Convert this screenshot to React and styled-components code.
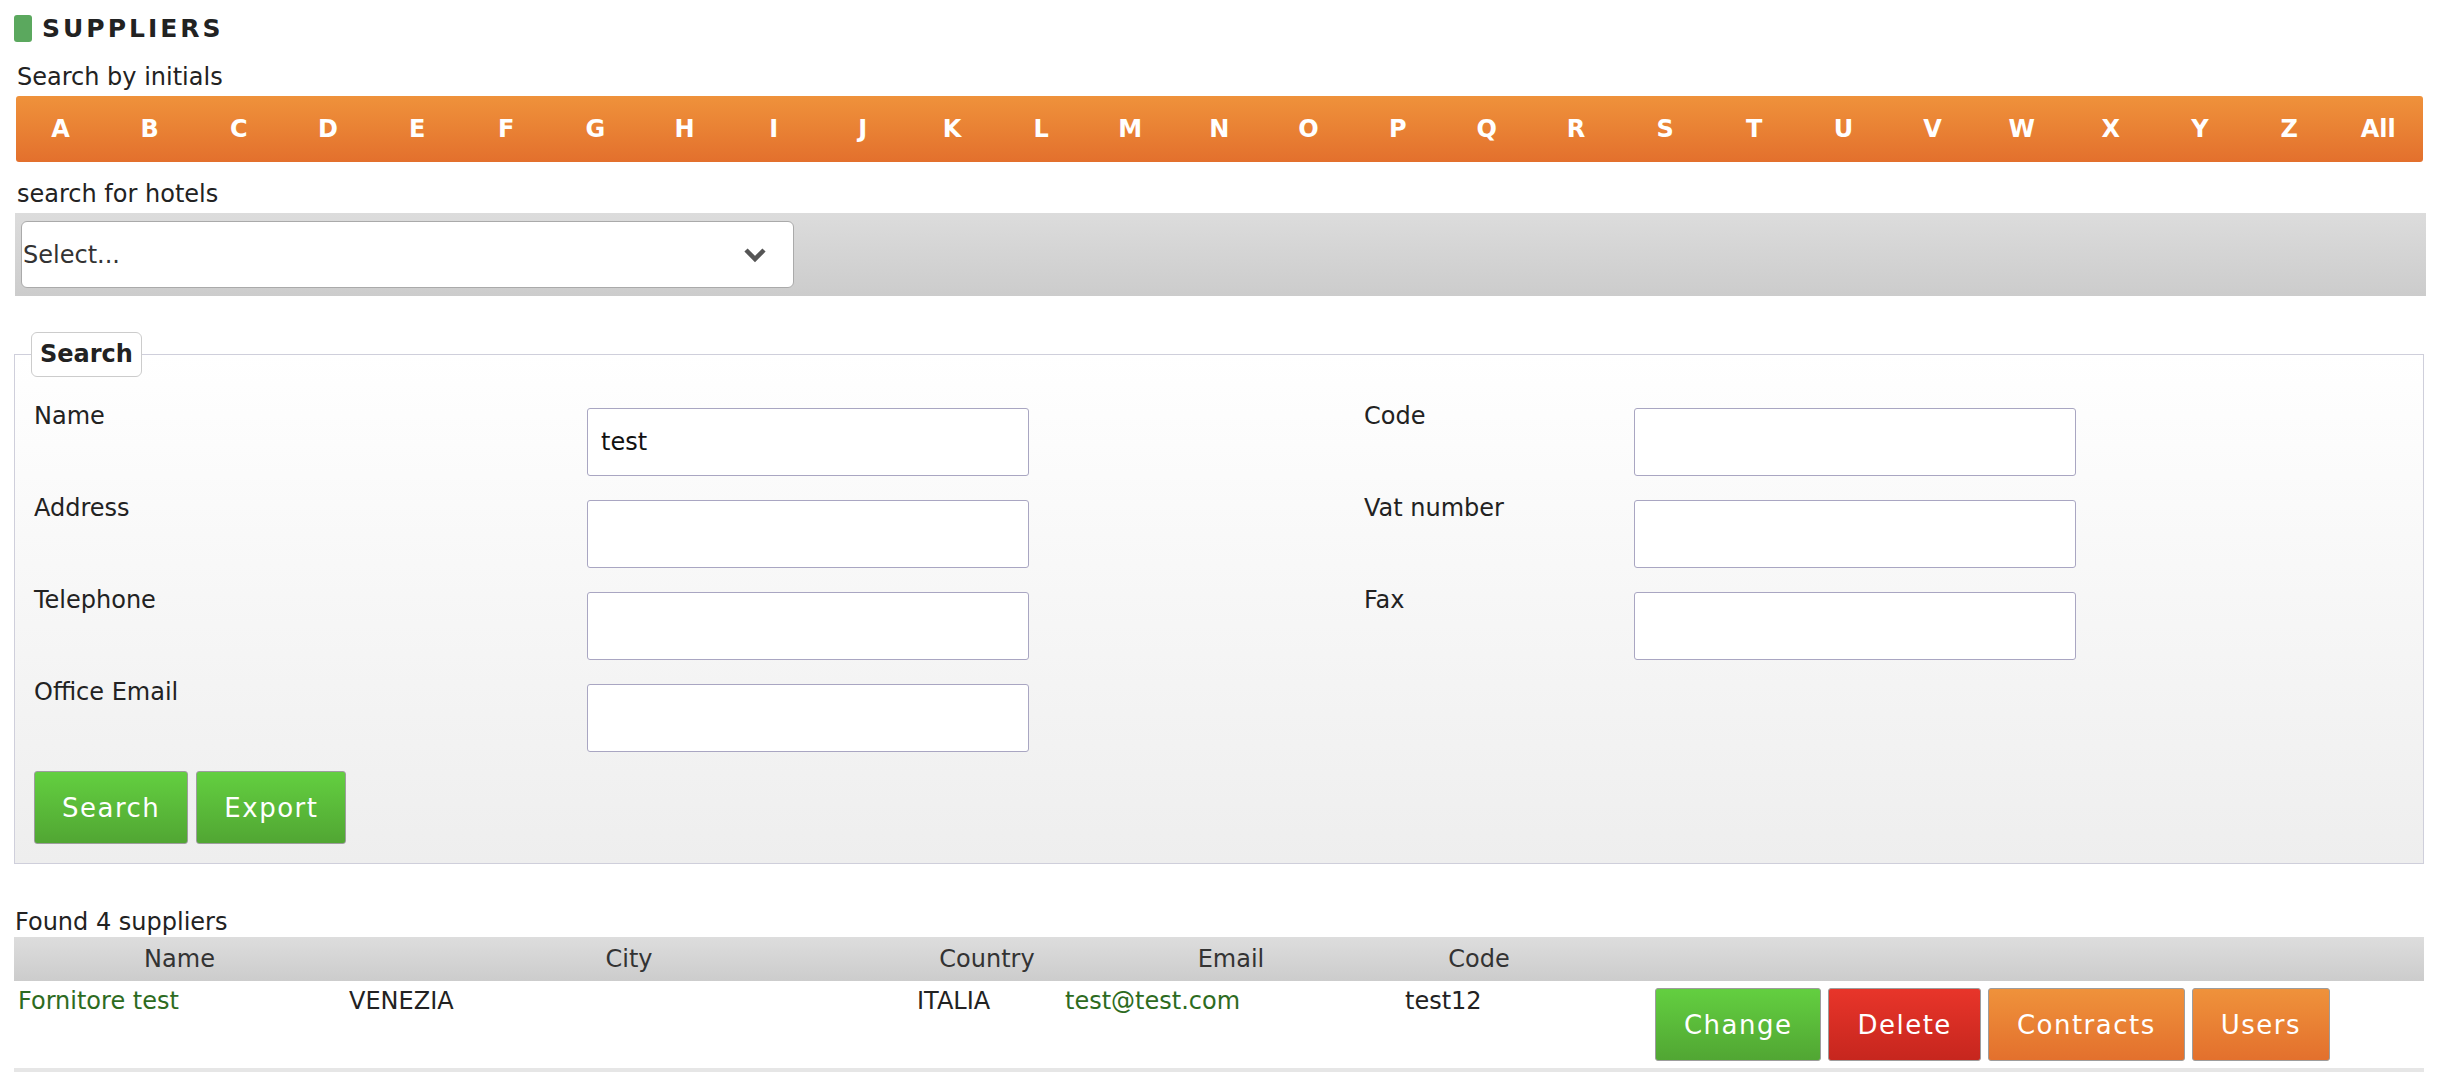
import styled, { createGlobalStyle } from "styled-components";

const LETTERS = "ABCDEFGHIJKLMNOPQRSTUVWXYZ".split("").concat("All");

const FIELDS = [
  { label: "Name", value: "test", right: "Code" },
  { label: "Address", right: "Vat number" },
  { label: "Telephone", right: "Fax" },
  { label: "Office Email" },
];

const TOTAL = 4;

const SUPPLIERS = [
  {
    name: "Fornitore test",
    city: "VENEZIA",
    country: "ITALIA",
    email: "test@test.com",
    code: "test12",
  },
];

const GlobalStyle = createGlobalStyle`
  body {
    margin: 0;
    background: #fff;
    color: #222;
    font-family: "DejaVu Sans", "Open Sans", sans-serif;
    font-size: 24px;
    line-height: 30px;
  }
  * { box-sizing: border-box; }
`;

const Page = styled.div`
  padding: 0 16px 0 14px;
`;

const Title = styled.div`
  display: flex;
  align-items: center;
  gap: 10px;
  margin-top: 15px;
  height: 27px;
`;

const Marker = styled.span`
  width: 18px;
  height: 27px;
  border-radius: 3px;
  background: #5ba85e;
`;

const TitleText = styled.h1`
  margin: 0;
  font-size: 25px;
  font-weight: bold;
  letter-spacing: 3px;
  color: #222;
`;

const Caption = styled.div`
  margin: ${(p) => p.$top}px 0 4px 3px;
  height: 30px;
`;

const Initials = styled.div`
  display: flex;
  height: 66px;
  margin: 0 1px 0 2px;
  border-radius: 3px;
  background: linear-gradient(#ef923b, #e3702d);
`;

const Initial = styled.a`
  flex: 1;
  display: flex;
  align-items: center;
  justify-content: center;
  color: #fff;
  font-weight: bold;
  font-size: 24px;
  cursor: pointer;
`;

const HotelBand = styled.div`
  padding: 8px 6px;
  margin-right: -2px;
  margin-left: 1px;
  background: linear-gradient(#dcdcdc, #cccccc);
`;

const SelectBox = styled.div`
  width: 773px;
  height: 67px;
  display: flex;
  align-items: center;
  justify-content: space-between;
  padding: 0 26px 0 1px;
  background: #fff;
  border: 1px solid #aaa;
  border-radius: 6px;
  color: #333;
`;

const SearchBox = styled.fieldset`
  margin: 36px 0 0 0;
  padding: 31px 19px 19px 19px;
  border: 1px solid #cfcfdb;
  background: linear-gradient(#ffffff, #eeeeee);
`;

const Legend = styled.legend`
  margin-left: -3px;
  padding: 0 8px;
  line-height: 43px;
  font-weight: bold;
  background: #fff;
  border: 1px solid #ccc;
  border-radius: 6px;
`;

const FormGrid = styled.div`
  display: grid;
  grid-template-columns: 553px 777px 270px 1fr;
  row-gap: 24px;
`;

const Label = styled.label`
  margin-top: -7px;
`;

const TextInput = styled.input`
  width: 442px;
  height: 68px;
  padding: 0 13px;
  border: 1px solid #a9a6c2;
  border-radius: 3px;
  background: #fff;
  font-family: inherit;
  font-size: 24px;
  color: #111;
  outline: none;
`;

const Actions = styled.div`
  display: flex;
  gap: ${(p) => p.$gap}px;
  margin-top: ${(p) => p.$top || 0}px;
`;

const COLORS = {
  green: ["#63cf40", "#51a633"],
  red: ["#e8352a", "#c6261e"],
  orange: ["#ef923b", "#e3702d"],
};

const Button = styled.button`
  height: 73px;
  padding: 0 ${(p) => p.$pad || 28}px;
  border: 1px solid #9d9d9d;
  border-radius: 3px;
  background: linear-gradient(
    ${(p) => COLORS[p.$tone][0]},
    ${(p) => COLORS[p.$tone][1]}
  );
  color: #fff;
  font-family: "DejaVu Sans", sans-serif;
  font-size: 26px;
  letter-spacing: 1.5px;
  cursor: pointer;
`;

const Found = styled.div`
  margin: 43px 0 0 1px;
  height: 30px;
`;

const Table = styled.table`
  width: 100%;
  border-collapse: collapse;
  table-layout: fixed;
`;

const HeadRow = styled.tr`
  height: 44px;
  background: linear-gradient(#dddddd, #cccccc);
`;

const Th = styled.th`
  width: ${(p) => (p.$w ? `${p.$w}px` : "auto")};
  padding: 0;
  font-weight: normal;
  color: #333;
  text-align: center;
`;

const Row = styled.tr`
  border-bottom: 4px solid #e6e6e6;
`;

const Td = styled.td`
  padding: 5px 4px;
  vertical-align: top;
  color: ${(p) => (p.$link ? "#2d6b21" : "#222")};
`;

const ActionCell = styled.td`
  padding: 7px 0;
  vertical-align: top;
  & > div {
    justify-content: center;
    padding-left: 4px;
  }
`;

const Chevron = () => (
  <svg width="24" height="16" viewBox="0 0 24 16">
    <polyline
      points="3,3 12,12 21,3"
      fill="none"
      stroke="#555"
      strokeWidth="4.5"
    />
  </svg>
);

const FieldRow = ({ field }) => (
  <>
    <Label>{field.label}</Label>
    <div>
      <TextInput defaultValue={field.value || ""} />
    </div>
    {field.right ? (
      <>
        <Label>{field.right}</Label>
        <div>
          <TextInput />
        </div>
      </>
    ) : (
      <>
        <span />
        <span />
      </>
    )}
  </>
);

const App = () => {
  return (
    <Page>
      <GlobalStyle />
      <Title>
        <Marker />
        <TitleText>SUPPLIERS</TitleText>
      </Title>

      <Caption $top={20}>Search by initials</Caption>
      <Initials>
        {LETTERS.map((l) => (
          <Initial key={l}>{l}</Initial>
        ))}
      </Initials>

      <Caption $top={17}>search for hotels</Caption>
      <HotelBand>
        <SelectBox>
          <span>Select...</span>
          <Chevron />
        </SelectBox>
      </HotelBand>

      <SearchBox>
        <Legend>Search</Legend>
        <FormGrid>
          {FIELDS.map((f) => (
            <FieldRow key={f.label} field={f} />
          ))}
        </FormGrid>
        <Actions $gap={8} $top={19}>
          <Button $tone="green" $pad={27}>Search</Button>
          <Button $tone="green" $pad={27}>Export</Button>
        </Actions>
      </SearchBox>

      <Found>Found {TOTAL} suppliers</Found>
      <Table>
        <thead>
          <HeadRow>
            <Th $w={331}>Name</Th>
            <Th $w={568}>City</Th>
            <Th $w={148}>Country</Th>
            <Th $w={340}>Email</Th>
            <Th $w={156}>Code</Th>
            <Th />
          </HeadRow>
        </thead>
        <tbody>
          {SUPPLIERS.map((s) => (
            <Row key={s.code}>
              <Td $link>{s.name}</Td>
              <Td>{s.city}</Td>
              <Td>{s.country}</Td>
              <Td $link>{s.email}</Td>
              <Td>{s.code}</Td>
              <ActionCell>
                <Actions $gap={7}>
                  <Button $tone="green">Change</Button>
                  <Button $tone="red">Delete</Button>
                  <Button $tone="orange">Contracts</Button>
                  <Button $tone="orange">Users</Button>
                </Actions>
              </ActionCell>
            </Row>
          ))}
        </tbody>
      </Table>
    </Page>
  );
};

export default App;
